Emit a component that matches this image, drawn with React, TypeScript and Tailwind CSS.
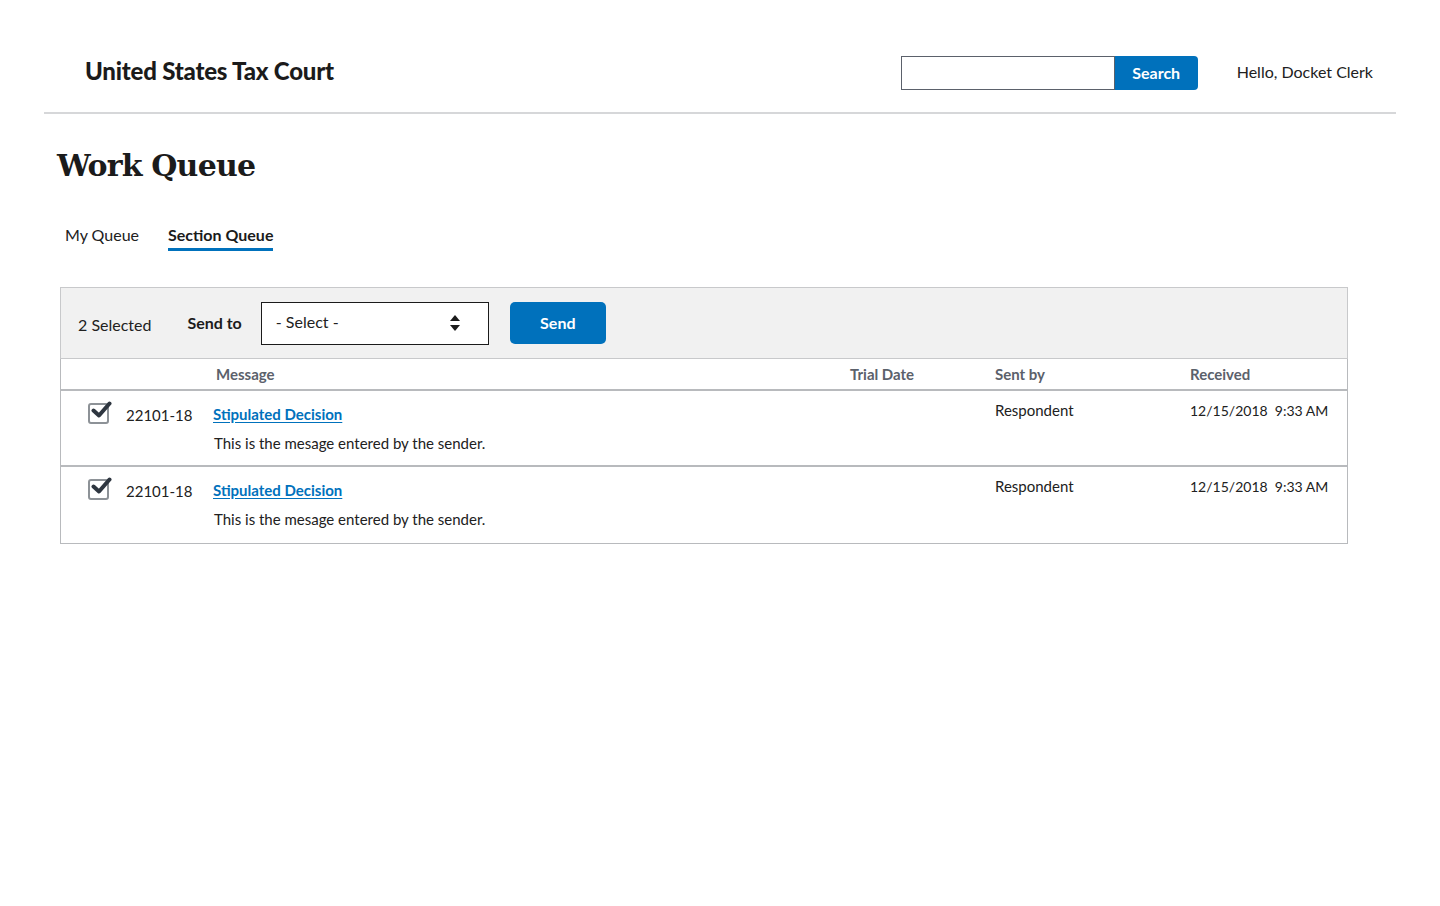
import React from 'react';

const sans = "font-['Lato','Liberation_Sans',sans-serif]";

const rows = [
  { docket: '22101-18', title: 'Stipulated Decision', message: 'This is the mesage entered by the sender.', sentBy: 'Respondent', received: '12/15/2018  9:33 AM' },
  { docket: '22101-18', title: 'Stipulated Decision', message: 'This is the mesage entered by the sender.', sentBy: 'Respondent', received: '12/15/2018  9:33 AM' },
];

function CheckBox() {
  return (
    <span className="relative block w-[22px] h-[22px] mt-[2px]">
      <span className="absolute left-0 top-[2px] w-[21px] h-[21px] rounded-[3px] border-2 border-[#8d9297] bg-white" />
      <svg className="absolute left-[3px] top-0" width="21" height="18" viewBox="0 0 21 18">
        <path d="M2.5 9.5 L8 14.5 L18.5 2.5" fill="none" stroke="#2e3640" strokeWidth="4" strokeLinecap="round" strokeLinejoin="round" />
      </svg>
    </span>
  );
}

function SortArrows() {
  return (
    <svg width="10" height="16" viewBox="0 0 10 16">
      <path d="M5 0 L10 6 L0 6 Z" fill="#1b1b1b" />
      <path d="M5 16 L10 10 L0 10 Z" fill="#1b1b1b" />
    </svg>
  );
}

export default function App() {
  return (
    <div className={`min-h-screen bg-white text-[#212121] ${sans}`}>
      {/* header */}
      <header className="mx-[44px] border-b-2 border-[#d6d7d9] h-[114px] flex items-center justify-between pl-[41px] pr-[23px] pt-[36px]">
        <div className="text-[24px] font-black tracking-[-0.2px] text-[#1b1b1b] mt-[-7px]">United States Tax Court</div>
        <div className="flex items-center mt-[-3px]">
          <div className="flex">
            <input className="w-[214px] h-[34px] border border-[#5b616b] outline-none" />
            <button className="h-[34px] w-[83px] bg-[#0071bc] text-white font-bold text-[16px] rounded-r-[4px] pt-[1px]">Search</button>
          </div>
          <div className="ml-[39px] text-[16px] text-[#212121] mt-[-1px]">Hello, Docket Clerk</div>
        </div>
      </header>

      <main className="px-[57px]">
        <h1 className="mt-[30px] text-[30px] leading-[44px] font-bold font-['DejaVu_Serif','Liberation_Serif',serif] text-[#1b1b1b] tracking-[-0.8px]">Work Queue</h1>

        {/* tabs */}
        <nav className="mt-[35px] ml-[8px] flex gap-[29px] text-[16px]">
          <span className="pb-[4px]">My Queue</span>
          <span className="font-bold border-b-[3px] border-[#0071bc] pb-[1px] text-[#1b1b1b]">Section Queue</span>
        </nav>

        <div className="mt-[36px] mr-[35px] ml-[3px]">
          {/* action bar */}
          <div className="h-[72px] bg-[#f1f1f1] border border-[#c8c9cb] flex items-center pl-[17px]">
            <span className="text-[16px] text-[#212121] mt-[3px]">2 Selected</span>
            <span className="ml-[36px] text-[16px] font-bold text-[#1b1b1b]">Send to</span>
            <div className="ml-[19px] w-[228px] h-[43px] border border-[#1b1b1b] bg-white flex items-center justify-between pl-[14px] pr-[28px]">
              <span className="text-[16px] mt-[-3px]">- Select -</span>
              <SortArrows />
            </div>
            <button className="ml-[21px] w-[96px] h-[42px] rounded-[5px] bg-[#0071bc] text-white font-bold text-[16px]">Send</button>
          </div>

          {/* table */}
          <div className="border-x border-b border-[#b8babd]">
            <div className="h-[32px] grid grid-cols-[152px_637px_145px_195px_1fr] items-center text-[15px] font-bold text-[#5b616b] border-b-2 border-[#b8babd]">
              <span />
              <span className="pl-[3px]">Message</span>
              <span>Trial Date</span>
              <span>Sent by</span>
              <span>Received</span>
            </div>
            {rows.map((r, i) => (
              <div
                key={i}
                className={`h-[76px] grid grid-cols-[152px_637px_145px_195px_1fr] pt-[8px] text-[15px] ${i < rows.length - 1 ? 'border-b-2 border-[#b8babd]' : ''}`}
              >
                <div className="flex items-start pl-[27px] gap-[16px]">
                  <CheckBox />
                  <span className="mt-[5px]">{r.docket}</span>
                </div>
                <div>
                  <a href="#" className="block mt-[4px] font-bold text-[#0071bc] underline underline-offset-[2px]">{r.title}</a>
                  <div className="mt-[6px] pl-[1px]">{r.message}</div>
                </div>
                <div />
                <div>{r.sentBy}</div>
                <div className="mt-[1px] text-[14px] whitespace-pre">{r.received}</div>
              </div>
            ))}
          </div>
        </div>
      </main>
    </div>
  );
}
